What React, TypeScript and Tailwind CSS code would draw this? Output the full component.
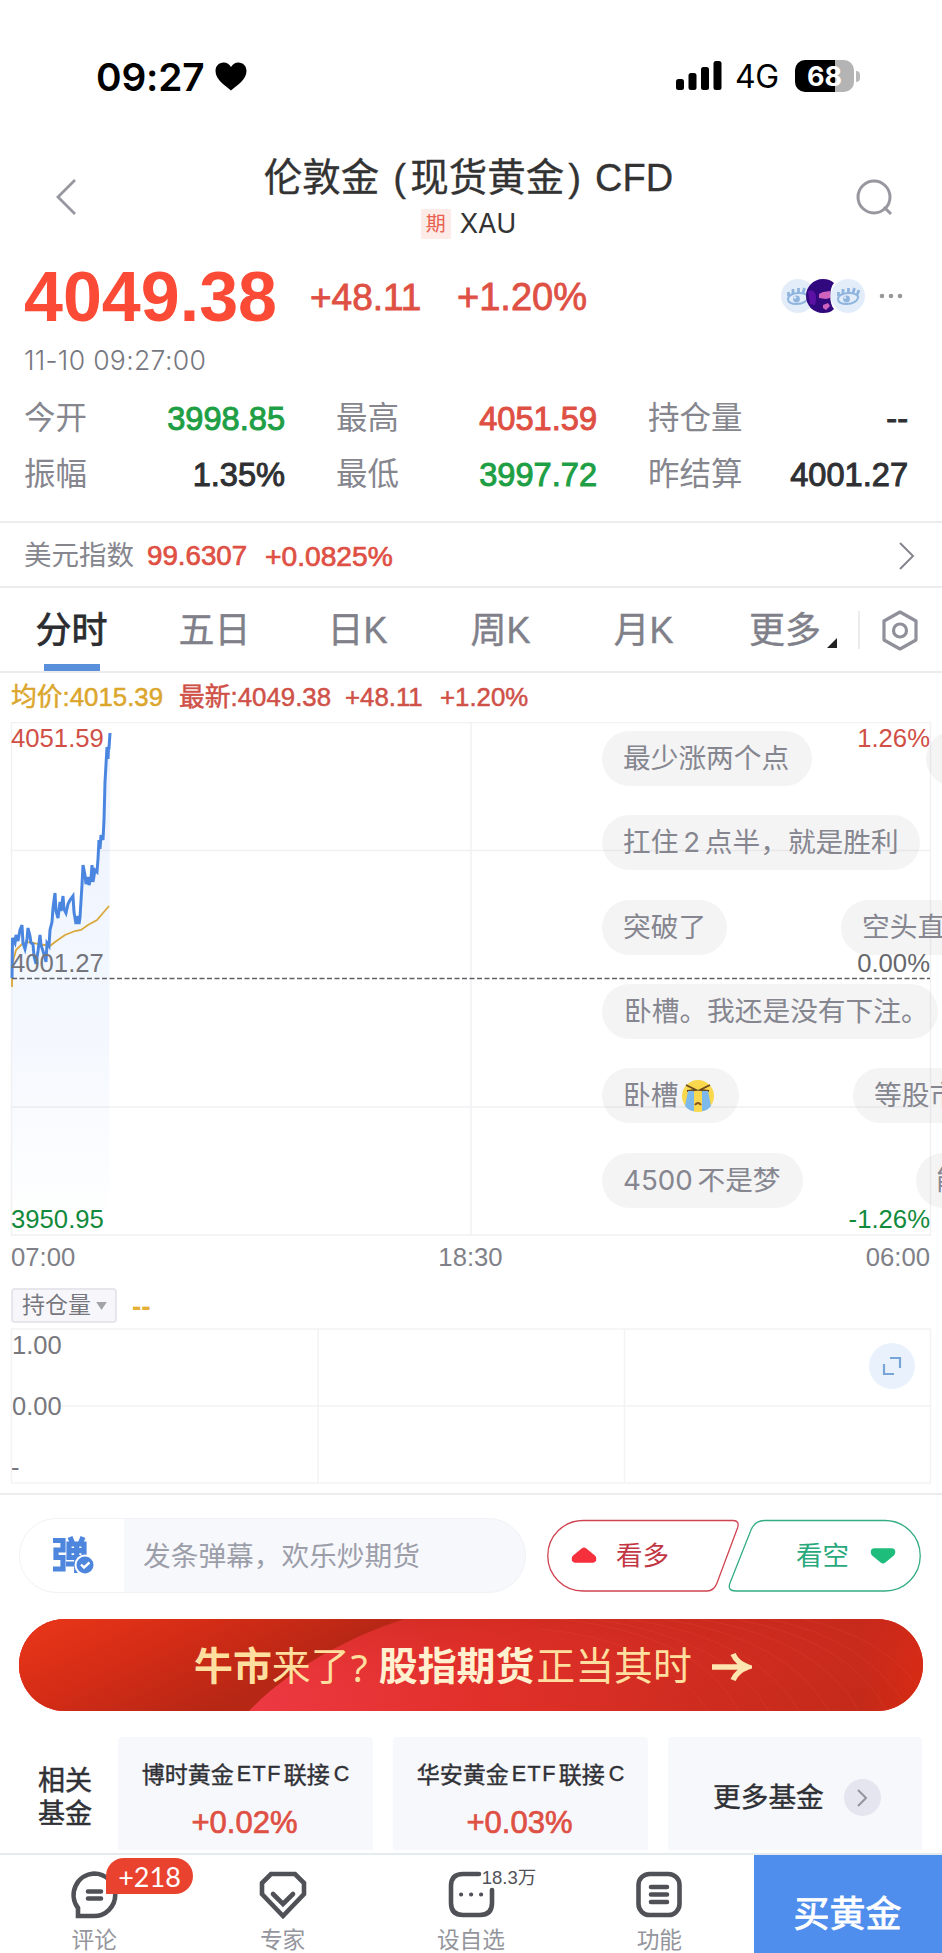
import type { ReactNode } from 'react';

const QUOTES = [
    { label: '今开', value: '3998.85', color: 'text-[#1f9f45]' },
    { label: '最高', value: '4051.59', color: 'text-[#df5044]' },
    { label: '持仓量', value: '--', color: 'text-[#2f3033]' },
    { label: '振幅', value: '1.35%', color: 'text-[#2f3033]' },
    { label: '最低', value: '3997.72', color: 'text-[#1f9f45]' },
    { label: '昨结算', value: '4001.27', color: 'text-[#2f3033]' },
];

const TABS = ['分时', '五日', '日K', '周K', '月K'];

// danmaku lanes, positioned inside the chart canvas
const BULLETS = [
    { text: '最少涨两个点', pos: 'left-[602px] top-[9px] w-[210px] pl-[21px]' },
    { text: '扛住 2 点半，就是胜利', pos: 'left-[602px] top-[93px] w-[318px] pl-[21px] [word-spacing:-3px]' },
    { text: '突破了', pos: 'left-[602px] top-[178px] w-[125px] pl-[21px]' },
    { text: '卧槽。我还是没有下注。', pos: 'left-[602px] top-[262px] w-[336px] pl-[22px]' },
    { text: '4500 不是梦', pos: 'left-[602px] top-[431px] w-[201px] pl-[21px] [word-spacing:-3px]' },
    { text: '', pos: 'left-[926px] top-[9px] w-[60px]' },
    { text: '空头直', pos: 'left-[841px] top-[178px] w-[140px] pl-[21px]' },
    { text: '等股市', pos: 'left-[853px] top-[346px] w-[140px] pl-[21px]' },
    { text: '能', pos: 'left-[916px] top-[431px] w-[80px] pl-[20px]' },
];

const PRICE =
    '12,256 12.5,216 15,221 16,213 18,219 20,208 22,203 23,221 25,227 27,217 28,206 30,214 31,221 33,222 34,234 36,242 38,229 40,213 41,223 43,229 45,236 46,240 47,221 49,224 50,208 52,200 53,186 55,171 56,189 58,196 60,180 61,189 63,174 64,187 66,191 68,182 70,178 73,174 74,190 76,202 78,194 79,202 80,195 82,163 83,143 85,153 86,162 88,155 89,163 91,156 92,143 93,160 95,148 97,150 98,137 99,118 100,127 101,113 103,118 104,98 105,60 107,25 108,37 108.5,26 109,26 110,11';
const AVERAGE = '12,265 12,243 16,228 22,222 30,220 38,222 50,224 55,220 65,213 75,209 81,208 88,203 97,198 103,191 109,184';

function StatusBar() {
    return (
        <div className="h-[130px] pt-[51px] pl-[96px] pr-[82px] flex justify-between items-start text-black">
            <div className="flex items-center h-[50px]">
                <span className="mt-[2px] font-['Inter'] font-semibold text-[38.800px] tracking-[-0.2px]">09:27</span>
                <svg className="ml-[11px]" width="32" height="29" viewBox="0 0 32 29">
                    <path d="M16 28.5C11 24 .5 18 .5 9 .5 4 4 .5 8.500.5 12 .5 14.500 2.500 16 5 17.500 2.500 20 .5 23.500.5 28 .5 31.500 4 31.500 9 31.500 18 21 24 16 28.500Z" />
                </svg>
            </div>
            <div className="flex items-center h-[50px]">
                <svg width="46" height="30" viewBox="0 0 46 30">
                    <rect x="0" y="18" width="8" height="11" rx="2.500" />
                    <rect x="12.500" y="12" width="8" height="17" rx="2.500" />
                    <rect x="25" y="6" width="8" height="23" rx="2.500" />
                    <rect x="37.500" y="0" width="8" height="29" rx="2.500" />
                </svg>
                <span className="mt-[2px] ml-[13px] w-[60px] font-['Inter'] text-[32px] tracking-[-0.3px] leading-none">4G</span>
                <div className="w-[59px] h-[32px] rounded-[10px] bg-[linear-gradient(90deg,#000_68%,#b4b4b4_68%)] flex items-center justify-center font-['Inter'] font-bold text-[27px] leading-none text-white">
                    68
                </div>
                <div className="ml-[2px] w-[4px] h-[11px] rounded-r-full bg-[#b9b9b9]" />
            </div>
        </div>
    );
}

function TitleBar() {
    return (
        <div className="h-[125px] flex items-start justify-between pl-[55px] pr-[48px]">
            <svg className="mt-[48px]" width="24" height="38" viewBox="0 0 24 38" fill="none" stroke="#97979f" strokeWidth="2.800">
                <path d="M20 2 3 19 20 36" />
            </svg>
            <div className="flex flex-col items-center pt-[23px] pl-[2px] text-[#333]">
                <h1 className="flex items-center h-[50px] text-[38.500px] whitespace-nowrap [-webkit-text-stroke:0.3px]">
                    伦敦金<span className="ml-[14px] mr-[4px]">(</span>现货黄金<span className="ml-[4px] mr-[14px]">)</span>
                    <span className="text-[38px]">CFD</span>
                </h1>
                <div className="flex items-center h-[42px] gap-[9px]">
                    <span className="size-[30px] bg-[#fdebe8] text-[#e8604f] text-[20px] leading-[30px] text-center">期</span>
                    <span className="font-['Inter'] text-[27px]">XAU</span>
                </div>
            </div>
            <svg className="mt-[49px]" width="38" height="38" viewBox="0 0 38 38" fill="none" stroke="#97979f" strokeWidth="3">
                <circle cx="18" cy="18" r="16" />
                <path d="M28 28l7 7" />
            </svg>
        </div>
    );
}

function EyeAvatar() {
    return (
        <svg width="34" height="34" viewBox="0 0 34 34">
            <circle cx="17" cy="17" r="17" fill="#e3edfa" />
            <path d="M7 20C7 16 13 14 18 14S28 16 27 19 22 25 16 25 7 24 7 20Z" fill="none" stroke="#8fb4de" strokeWidth="2" />
            <path d="M7.500 17V13M12 15V10M17.500 14V9M22 14 23.500 9M26 16 28 11" stroke="#8fb4de" strokeWidth="2.800" />
            <circle cx="15.500" cy="20" r="3.400" fill="#8fb4de" />
            <circle cx="14" cy="18.500" r="1.200" fill="#e3edfa" />
        </svg>
    );
}

function PriceBlock() {
    return (
        <div className="h-[266px] px-[24px]">
            <div className="h-[84px] flex items-center">
                <span className="w-[286px] text-[70px] font-bold leading-none text-[#fb4a35]">4049.38</span>
                <span className="w-[147px] text-[37px] leading-none text-[#df5044] [-webkit-text-stroke:0.8px]">+48.11</span>
                <span className="text-[38px] leading-none text-[#df5044] [-webkit-text-stroke:0.8px]">+1.20%</span>
                <div className="ml-auto mr-[13px] -mt-[3px] flex items-center">
                    <EyeAvatar />
                    <svg className="-ml-[9px]" width="28" height="34" viewBox="0 0 28 34">
                        <path d="M17 0C22 0 25 1.500 28 4 23 9 23 25 28 30 25 33 22 34 17 34 7 34 0 26 0 17S7 0 17 0Z" fill="#32087f" />
                        <path d="M2 12C8 10 12 14 9 26L4 25Z" fill="#5b12a4" />
                        <path d="M13 15 17 13 24 12V19L20 20 13 19ZM17 26 22 24 24 27 20 31 17 29Z" fill="#cf62bd" />
                    </svg>
                    <div className="-ml-[3px]">
                        <EyeAvatar />
                    </div>
                    <svg className="ml-[14px]" width="26" height="6" viewBox="0 0 26 6" fill="#97979c">
                        <circle cx="3" cy="3" r="2.300" />
                        <circle cx="12" cy="3" r="2.300" />
                        <circle cx="21" cy="3" r="2.300" />
                    </svg>
                </div>
            </div>
            <div className="h-[42px] pt-[1px] flex items-center font-['Inter'] font-light text-[26.600px] tracking-[0.300px] text-[#77787f]">11-10 09:27:00</div>
            <div className="grid grid-cols-[261px_261px_260px] gap-x-[51px] pt-[10px]">
                {QUOTES.map(q => (
                    <div key={q.label} className="h-[56px] flex items-center justify-between whitespace-nowrap">
                        <span className="text-[31.500px] leading-none text-[#85868e]">{q.label}</span>
                        <span className={`text-[32.600px] leading-none [-webkit-text-stroke:1px] ${q.color}`}>{q.value}</span>
                    </div>
                ))}
            </div>
        </div>
    );
}

function IndexRow() {
    return (
        <div className="h-[65px] pt-[3px] pl-[24px] pr-[27px] border-t-2 border-[#ececee] flex items-center leading-none">
            <span className="w-[123px] text-[27.500px] text-[#85868e]">美元指数</span>
            <span className="w-[118px] text-[27.700px] text-[#df5044] [-webkit-text-stroke:0.7px]">99.6307</span>
            <span className="text-[28.200px] text-[#df5044] [-webkit-text-stroke:0.7px]">+0.0825%</span>
            <svg className="ml-auto" width="17" height="30" viewBox="0 0 17 30" fill="none" stroke="#85868e" strokeWidth="2">
                <path d="M2 2 15 15 2 28" />
            </svg>
        </div>
    );
}

function Tabs() {
    return (
        <div className="h-[87px] border-y-2 border-[#ececee] flex items-stretch text-[36px] text-[#7f8089]">
            {TABS.map((tab, i) => (
                <div
                    key={tab}
                    className={`w-[143px] flex flex-col items-center ${i === 0 ? 'text-[#2b2c30] [-webkit-text-stroke:0.8px]' : '[-webkit-text-stroke:0.4px]'}`}
                >
                    <span className="h-[76px] pt-[9px] flex items-center leading-none">{tab}</span>
                    {i === 0 && <span className="w-[56px] h-[7px] bg-[#5a8fdc]" />}
                </div>
            ))}
            <div className="w-[143px] h-[76px] pt-[9px] pl-[34px] flex items-center [-webkit-text-stroke:0.4px]">
                <span className="leading-none">更多</span>
                <svg className="mt-[24px] ml-[6px]" width="10" height="10" viewBox="0 0 10 10" fill="#222">
                    <path d="M10 0V10H0Z" />
                </svg>
            </div>
            <div className="h-[38px] mt-[23px] border-l-2 border-[#ececee]" />
            <svg className="mt-[22px] ml-[21px]" width="38" height="41" viewBox="0 0 38 41" fill="none" stroke="#8f9099" strokeWidth="3.200" strokeLinejoin="round">
                <path d="M19 2 35 11V30L19 39 3 30V11Z" />
                <circle cx="19" cy="20.500" r="6.500" />
            </svg>
        </div>
    );
}

function Bullet({ pos, children }: { pos: string; children?: ReactNode }) {
    return (
        <div className={`absolute h-[55px] pt-[1px] rounded-full bg-[#9a9aa2]/11 flex items-center whitespace-nowrap font-['Inter','Noto_Sans_CJK_SC',sans-serif] text-[27.700px] leading-none text-[#85868f] ${pos}`}>
            {children}
        </div>
    );
}

function CryingFace() {
    return (
        <svg className="ml-[3px]" width="34" height="34" viewBox="0 0 34 34">
            <circle cx="17" cy="17" r="16" fill="#f9d84d" />
            <path d="M5 6 15 11 6 12M29 6 19 11 28 12" fill="none" stroke="#6b4a1d" strokeWidth="1.800" />
            <path d="M7 12H13V32C10 32 6 30 4 27ZM21 12H27L30 27C28 30 24 32 21 32Z" fill="#7db9ea" />
            <path d="M14 26Q17 22 20 26" fill="none" stroke="#8a5420" strokeWidth="2" />
        </svg>
    );
}

function PriceChart() {
    return (
        <div className="relative h-[514px] overflow-hidden text-[25.700px] leading-none">
            <svg width="942" height="514" viewBox="0 0 942 514" fill="none">
                <defs>
                    <linearGradient id="area" x1="0" y1="0" x2="0" y2="1">
                        <stop offset="0" stopColor="#5a8ff0" stopOpacity="0.1" />
                        <stop offset="0.6" stopColor="#5a8ff0" stopOpacity="0.07" />
                        <stop offset="1" stopColor="#5a8ff0" stopOpacity="0" />
                    </linearGradient>
                </defs>
                <path d="M11.500 .5H930.500V513H11.500ZM11.500 128.500H930.500M11.500 385H930.500M471 0V513" stroke="#f1f1f3" strokeWidth="1.500" />
                <polygon points={`12,500 ${PRICE} 109,500`} fill="url(#area)" />
                <polyline points={AVERAGE} stroke="#d9a83c" strokeWidth="1.800" />
                <polyline points={PRICE} stroke="#4a86e0" strokeWidth="3" />
                <path d="M12 256.500H930" stroke="#606066" strokeWidth="1.300" strokeDasharray="5 2.500" />
            </svg>
            <span className="absolute left-[11px] top-[4px] text-[#d04f46]">4051.59</span>
            <span className="absolute left-[11px] top-[229px] text-[#74757c]">4001.27</span>
            <span className="absolute left-[11px] top-[485px] text-[#128a3c]">3950.95</span>
            <span className="absolute right-[12px] top-[4px] text-[#d04f46]">1.26%</span>
            <span className="absolute right-[12px] top-[229px] text-[#66676c]">0.00%</span>
            <span className="absolute right-[12px] top-[485px] text-[#128a3c]">-1.26%</span>
            {BULLETS.map(b => (
                <Bullet key={b.pos} pos={b.pos}>{b.text}</Bullet>
            ))}
            <Bullet pos="left-[602px] top-[346px] w-[137px] pl-[21px]">
                卧槽
                <CryingFace />
            </Bullet>
        </div>
    );
}

function VolumeChart() {
    return (
        <div className="relative h-[167px] border-b-2 border-[#ececee] text-[25.500px] leading-none text-[#77787e]">
            <svg width="942" height="156" viewBox="0 0 942 156" fill="none">
                <path d="M11.500 1H930.500V155H11.500ZM11.500 78H930.500M318 1V154M624.500 1V154" stroke="#f3f3f5" strokeWidth="1.500" />
            </svg>
            <span className="absolute left-[12px] top-[5px]">1.00</span>
            <span className="absolute left-[12px] top-[66px] bg-white">0.00</span>
            <span className="absolute left-[11px] top-[127px]">-</span>
            <div className="absolute left-[869px] top-[15px] size-[46px] rounded-full bg-[#e9f2fc] flex items-center justify-center">
                <svg width="20" height="20" viewBox="0 0 20 20" fill="none" stroke="#77a5d6" strokeWidth="2.200">
                    <path d="M8 2H18V12M2 8V18H12" />
                </svg>
            </div>
        </div>
    );
}

function DanmakuBar() {
    return (
        <div className="h-[124px] pt-[23px] pl-[19px] pr-[20px] flex items-start">
            <div className="w-[508px] h-[75px] rounded-full border border-[#f1f2f5] bg-[#f7f8fc] overflow-hidden flex items-center">
                <div className="w-[104px] h-full bg-white flex items-center pl-[32px]">
                    <svg width="44" height="40" viewBox="0 0 44 40" fill="none" stroke="#4d86dc" strokeWidth="5.200">
                        <path d="M1 4.500H11V14H4V21.500H11V33H1M18 1 20.500 7M31 1 28.500 7M17 8H32V21.500H17ZM17 14.700H33M24.700 7V37M14 28H35" />
                        <circle cx="33" cy="29" r="10.500" fill="#fff" stroke="none" />
                        <circle cx="33" cy="29" r="8.500" fill="#4d86dc" stroke="none" />
                        <path d="M29 28.500 32 31.500 37.500 26.500" stroke="#fff" strokeWidth="2.400" />
                    </svg>
                </div>
                <span className="pt-[3px] pl-[19px] text-[27.700px] leading-none text-[#9c9eaa]">发条弹幕，欢乐炒期货</span>
            </div>
            <div className="ml-[20px] relative w-[376px] h-[75px]">
                <svg width="376" height="75" viewBox="0 0 376 75" fill="none" strokeWidth="1.300">
                    <path d="M37 2.500H187Q194 2.500 191.500 10L171 65Q168 73 161 73H37A35.250 35.250 0 0 1 37 2.500Z" stroke="#cf4450" />
                    <path d="M219 2.500H339A35.250 35.250 0 0 1 339 73H190Q181 73 184 65L205 12Q209 2.500 219 2.500Z" stroke="#35ad82" />
                    <path d="M29.500 41V40.500L38 33.500 46.500 40.500V41Z" fill="#f5303c" stroke="#f5303c" strokeWidth="7.500" strokeLinejoin="round" />
                    <path d="M328.500 34V34.500L337 41.500 345.500 34.500V34Z" fill="#1fbd7c" stroke="#1fbd7c" strokeWidth="7.500" strokeLinejoin="round" />
                </svg>
                <span className="absolute left-[70px] top-[25px] text-[26.500px] leading-none text-[#c33745]">看多</span>
                <span className="absolute left-[250px] top-[25px] text-[26.500px] leading-none text-[#28a97b]">看空</span>
            </div>
        </div>
    );
}

function Banner() {
    return (
        <div className="relative mx-[19px] h-[92px] rounded-full overflow-hidden flex items-center bg-[#e02f20]">
            <svg className="absolute inset-0" width="904" height="92" viewBox="0 0 904 92" fill="none">
                <defs>
                    <linearGradient id="fold" x1="0" y1="0" x2="1" y2="0.5">
                        <stop offset="0.1" stopColor="#e53418" />
                        <stop offset="0.4" stopColor="#d42c16" />
                        <stop offset="0.8" stopColor="#b62715" />
                    </linearGradient>
                    <linearGradient id="base" x1="0" y1="0" x2="1" y2="0">
                        <stop offset="0.2" stopColor="#ef3b48" />
                        <stop offset="0.5" stopColor="#e2302b" />
                        <stop offset="0.75" stopColor="#cf2c20" />
                        <stop offset="0.93" stopColor="#c42a1a" />
                        <stop offset="1" stopColor="#d62a12" />
                    </linearGradient>
                    <linearGradient id="shade" x1="0" y1="0" x2="0" y2="1">
                        <stop offset="0" stopColor="#c8281c" stopOpacity="0.8" />
                        <stop offset="0.8" stopColor="#e2302b" stopOpacity="0" />
                    </linearGradient>
                </defs>
                <rect width="904" height="92" fill="url(#base)" />
                <rect width="904" height="92" fill="url(#shade)" fillOpacity="0.6" />
                <path d="M0 0H385C330 18 270 50 230 92H0Z" fill="url(#fold)" />
                <g stroke="#e8503a" strokeOpacity="0.25">
                    <path d="M520 10Q640 20 690 92M540 0Q680 15 720 92M575 0Q710 20 750 92M610 0Q740 20 780 92M645 0Q770 20 810 92M680 0Q800 20 840 92M715 0Q830 20 868 92M750 0Q850 20 890 92M785 0Q870 20 904 75" />
                </g>
            </svg>
            <div className="relative pt-[5px] pl-[175px] flex items-center text-[38.900px] leading-none text-[#ffdf9f] whitespace-nowrap">
                <b>牛市</b>
                <span className="w-[79px]">来了</span>
                <span className="w-[28px] font-['Noto_Sans']">?</span>
                <b className="text-[#fff0cf]">股指期货</b>
                <span className="ml-[2px]">正当其时</span>
                <svg className="ml-[20px] -mt-[1px]" width="40" height="32" viewBox="0 0 40 32" fill="none" stroke="#ffe5b0" strokeWidth="5.500">
                    <path d="M0 16H36M21 3Q25 12 36 16 25 20 21 29" />
                </svg>
            </div>
        </div>
    );
}

function FundCard({ name, change }: { name: ReactNode; change: string }) {
    return (
        <div className="w-[255px] h-[113px] rounded-t-[4px] bg-[#f7f8fc] flex flex-col items-center">
            <span className="h-[58px] pt-[18px] flex items-center text-[23px] leading-none text-[#303136] whitespace-nowrap [-webkit-text-stroke:0.4px]">{name}</span>
            <span className="h-[48px] pt-[7px] pr-[2px] flex items-center text-[31px] leading-none text-[#df5044] [-webkit-text-stroke:0.7px]">{change}</span>
        </div>
    );
}

function Funds() {
    const latin = 'ml-[3px] mr-[2px] text-[21.500px] tracking-[1.500px]';
    return (
        <div className="h-[142px] pt-[26px] pl-[38px] flex items-start gap-[20px]">
            <div className="w-[60px] pt-[28px] text-[27px] leading-[33px] text-[#303136] [-webkit-text-stroke:0.5px]">
                相关
                <br />
                基金
            </div>
            <FundCard name={<>博时黄金<span className={latin}>ETF</span>联接<span className="ml-[4px] text-[21.500px]">C</span></>} change="+0.02%" />
            <FundCard name={<>华安黄金<span className={latin}>ETF</span>联接<span className="ml-[4px] text-[21.500px]">C</span></>} change="+0.03%" />
            <div className="w-[254px] h-[113px] pt-[8px] pl-[45px] rounded-t-[4px] bg-[#f7f8fc] flex items-center">
                <span className="text-[27.700px] leading-none text-[#303136] [-webkit-text-stroke:0.4px]">更多基金</span>
                <span className="ml-[20px] size-[37px] rounded-full bg-[#e5e5f0] flex items-center justify-center">
                    <svg width="10" height="18" viewBox="0 0 10 18" fill="none" stroke="#94949f" strokeWidth="2">
                        <path d="M1 1 9 9 1 17" />
                    </svg>
                </span>
            </div>
        </div>
    );
}

function NavItem({ label, children }: { label: string; children: ReactNode }) {
    return (
        <div className="relative w-[188.400px] pt-[15px] flex flex-col items-center">
            <svg width="48" height="50" viewBox="0 0 48 50" fill="none" stroke="#505157" strokeWidth="4.600" strokeLinecap="round">
                {children}
            </svg>
            <span className="mt-[9px] text-[22.700px] leading-none text-[#94959d]">{label}</span>
        </div>
    );
}

function BottomNav() {
    return (
        <div className="h-[100px] border-t-2 border-[#e4ebee] flex overflow-hidden">
            <div className="relative">
                <NavItem label="评论">
                    <path d="M24 3.500A21 21 0 1 1 24 46H8V38A21.500 21.500 0 0 1 24 3.500ZM18 21.500H31M18 28.500H31" />
                </NavItem>
                <div className="absolute left-[106px] top-[3px] w-[87px] h-[36px] rounded-t-[18px] rounded-br-[18px] bg-[#e9432f] flex items-center justify-center font-['Lato'] text-[27px] leading-none text-white">
                    +218
                </div>
            </div>
            <NavItem label="专家">
                <path d="M12 4H36L45 13V24L24 46 3 24V13ZM14 24 24 34 34 24" />
            </NavItem>
            <div className="relative">
                <NavItem label="设自选">
                    <path d="M32 4H16Q4 4 4 16V33Q4 45 16 45H33Q45 45 45 33V20" />
                    <path d="M14 24.500H14.200M24 24.500H24.200M34 24.500H34.200" strokeWidth="4" />
                </NavItem>
                <span className="absolute left-[105px] top-[14px] text-[18.500px] leading-none text-[#505157] whitespace-nowrap">18.3万</span>
            </div>
            <NavItem label="功能">
                <rect x="3.500" y="4" width="41" height="41" rx="11" />
                <path d="M16 17H32M16 24.500H32M16 32H32" />
            </NavItem>
            <button className="w-[188px] h-[100px] pt-[20px] bg-[#508eee] text-[36px] leading-none text-white flex items-center justify-center [-webkit-text-stroke:0.8px]">
                买黄金
            </button>
        </div>
    );
}

export default function App() {
    return (
        <div className="w-[942px] h-[1953px] overflow-hidden bg-white font-['Liberation_Sans','Noto_Sans_CJK_SC',sans-serif]">
            <StatusBar />
            <TitleBar />
            <PriceBlock />
            <IndexRow />
            <Tabs />
            <div className="h-[49px] pl-[11px] flex items-center text-[25.800px] leading-none text-[#cf5148] [-webkit-text-stroke:0.5px]">
                <span className="w-[168px] text-[#dba62c]">均价:4015.39</span>
                <span className="w-[166px]">最新:4049.38</span>
                <span className="w-[95px]">+48.11</span>
                <span>+1.20%</span>
            </div>
            <PriceChart />
            <div className="h-[52px] pl-[11px] pr-[12px] flex justify-between items-start pt-[7px] text-[25.700px] leading-[28px] text-[#808188]">
                <span>07:00</span>
                <span>18:30</span>
                <span>06:00</span>
            </div>
            <div className="h-[40px] pl-[11px] flex items-start">
                <div className="w-[106px] h-[35px] pl-[9px] rounded-[4px] border-2 border-[#e6e6ec] bg-[#f7f7fb] flex items-center text-[23px] leading-none text-[#77787f]">
                    持仓量
                    <svg className="ml-[5px]" width="11" height="8" viewBox="0 0 12 9" fill="#a2a3a9">
                        <path d="M0 0H12L6 9Z" />
                    </svg>
                </div>
                <span className="ml-[15px] mt-[5px] text-[28px] leading-none font-bold text-[#e5ae34]">--</span>
            </div>
            <VolumeChart />
            <DanmakuBar />
            <Banner />
            <Funds />
            <BottomNav />
        </div>
    );
}
